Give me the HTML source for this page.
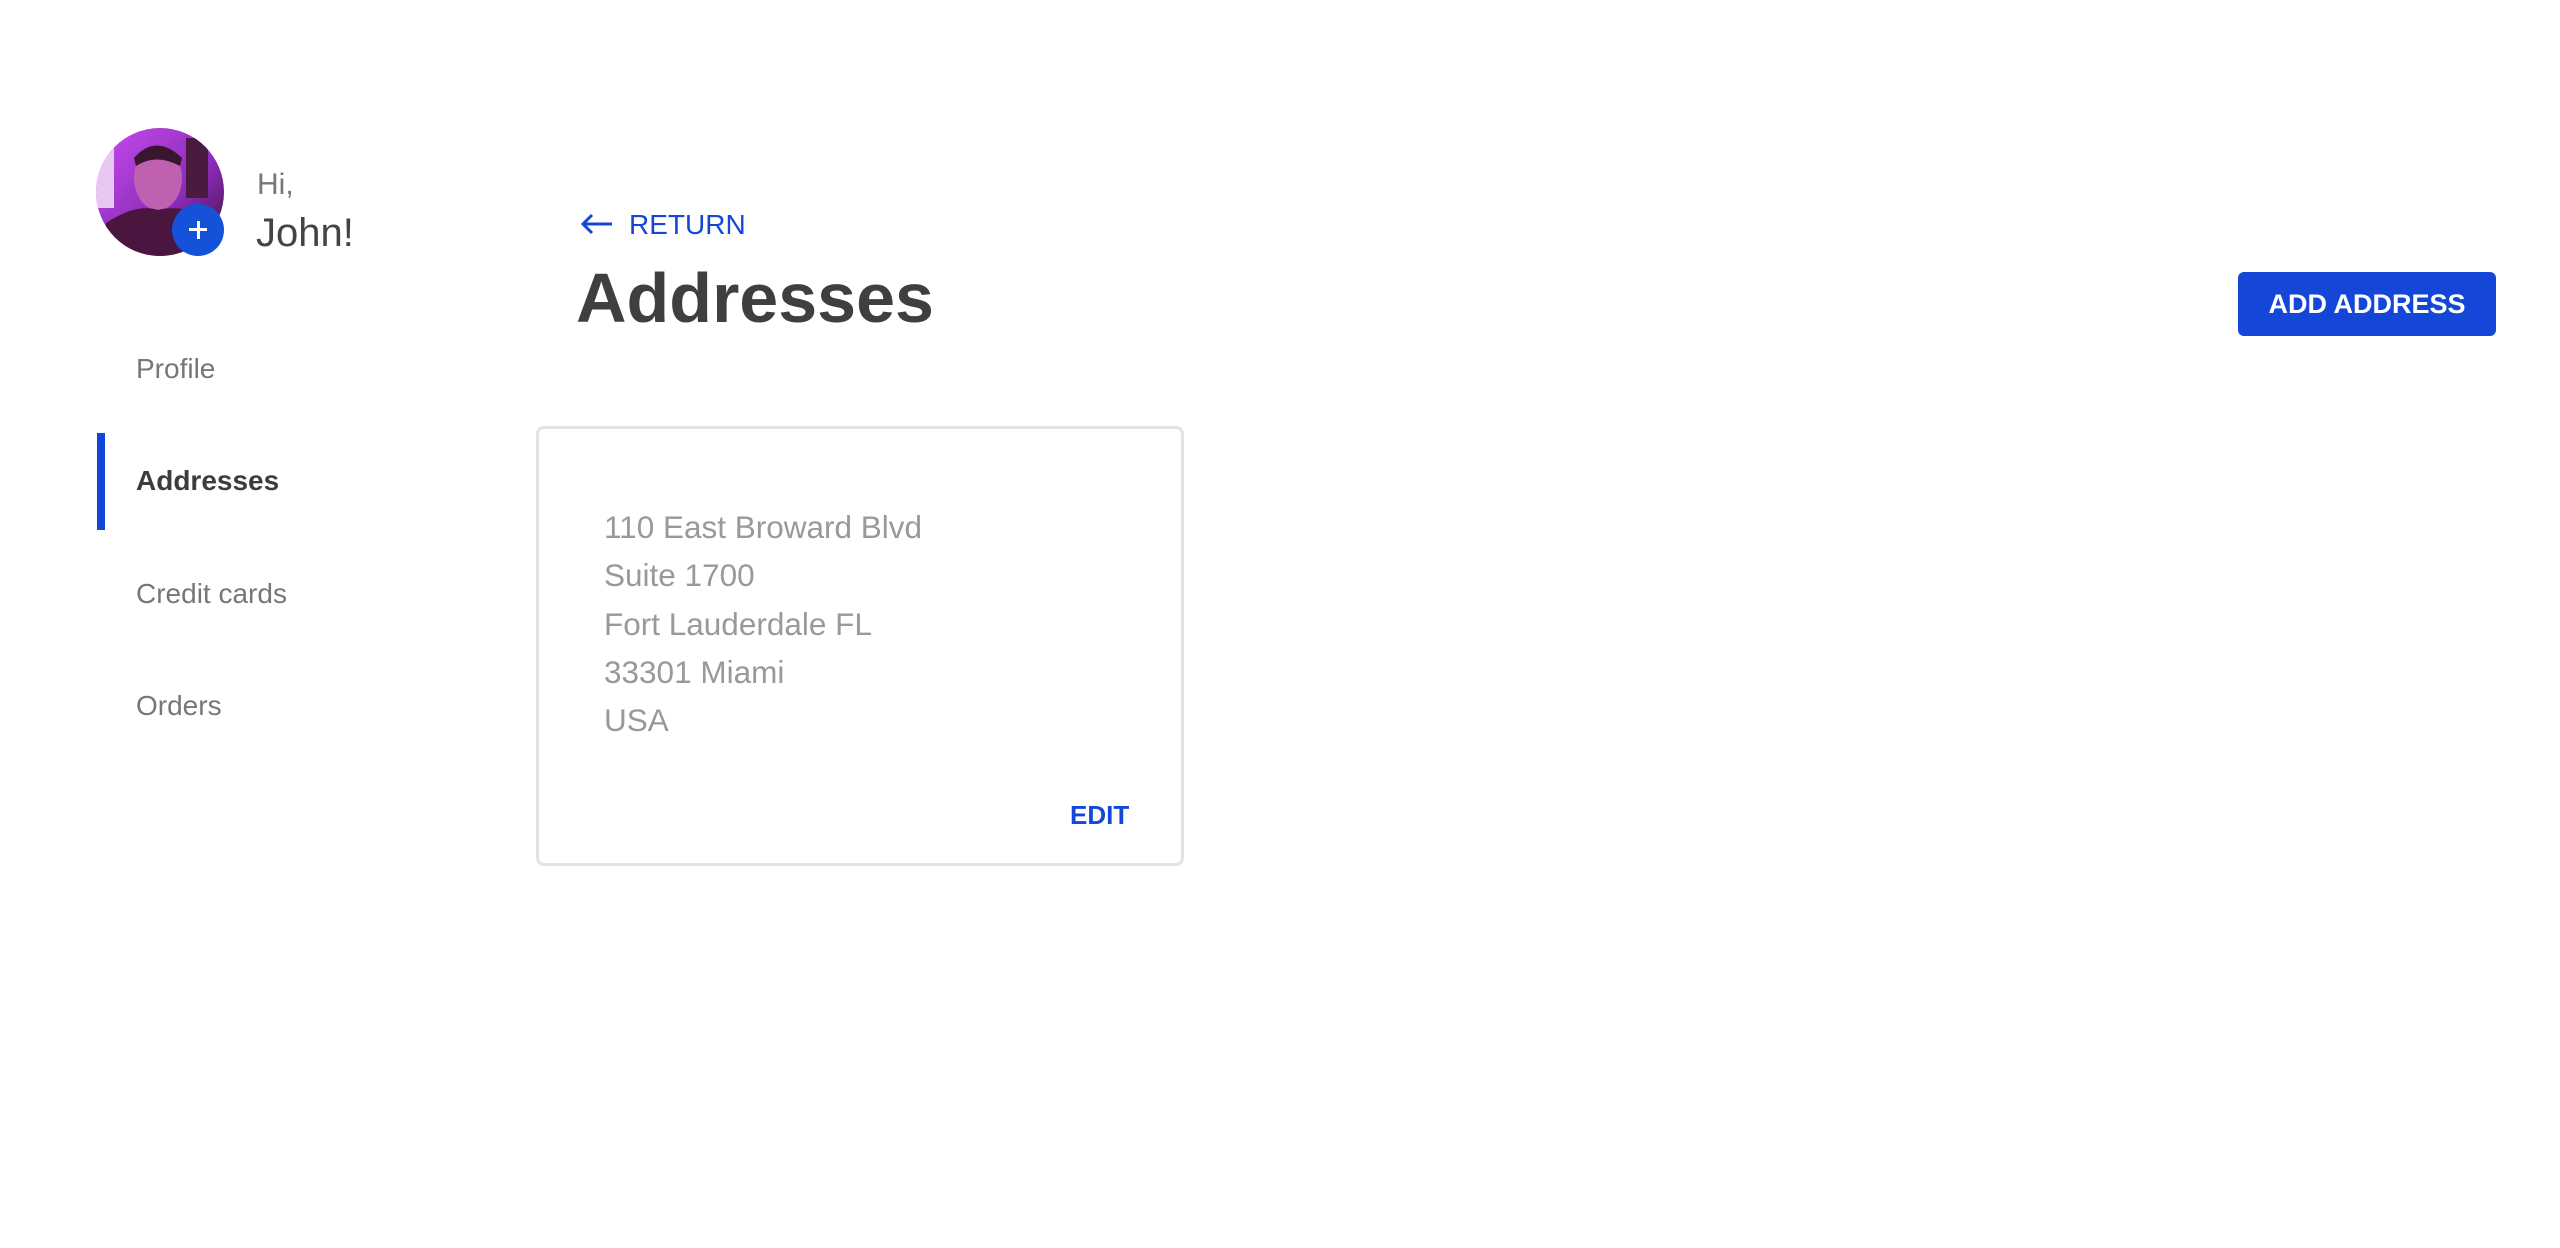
<!DOCTYPE html>
<html><head><meta charset="utf-8"><style>
*{margin:0;padding:0;box-sizing:border-box}
body{width:2560px;height:1248px;background:#fff;font-family:"Liberation Sans",sans-serif;position:relative;overflow:hidden}
.abs{position:absolute;white-space:nowrap}
.blue{color:#1447d8}
</style></head><body>
<svg class="abs" style="left:96px;top:128px" width="128" height="128" viewBox="0 0 128 128">
<defs><clipPath id="c"><circle cx="64" cy="64" r="64"/></clipPath>
<linearGradient id="g" x1="0" y1="0" x2="1" y2="1"><stop offset="0" stop-color="#c84df0"/><stop offset="0.6" stop-color="#8a2bb8"/><stop offset="1" stop-color="#3a1030"/></linearGradient></defs>
<g clip-path="url(#c)">
<rect width="128" height="128" fill="url(#g)"/>
<rect x="0" y="20" width="18" height="60" fill="#e8c8f0"/>
<rect x="90" y="10" width="22" height="60" fill="#4a1a40"/>
<ellipse cx="62" cy="50" rx="24" ry="32" fill="#c060b0"/>
<path d="M38 30 Q60 5 86 30 L84 38 Q60 25 40 38Z" fill="#3a1530"/>
<path d="M0 128 L10 95 Q40 75 62 82 Q90 75 120 95 L128 128Z" fill="#4a1640"/>
</g></svg>
<div class="abs" style="left:172px;top:204px;width:52px;height:52px;border-radius:50%;background:#1452da;"></div>
<div class="abs" style="left:189px;top:228px;width:18px;height:3px;background:#fff"></div>
<div class="abs" style="left:196.5px;top:221px;width:3px;height:18px;background:#fff"></div>
<div class="abs" style="left:257px;top:168px;font-size:30px;color:#777;font-weight:300">Hi,</div>
<div class="abs" style="left:256px;top:211px;font-size:40px;color:#444;font-weight:300">John!</div>

<div class="abs" style="left:136px;top:353px;font-size:28px;color:#777">Profile</div>
<div class="abs" style="left:97px;top:433px;width:8px;height:97px;background:#1447d8"></div>
<div class="abs" style="left:136px;top:465px;font-size:28px;color:#3c3c3c;font-weight:bold">Addresses</div>
<div class="abs" style="left:136px;top:578px;font-size:28px;color:#777">Credit cards</div>
<div class="abs" style="left:136px;top:690px;font-size:28px;color:#777">Orders</div>

<svg class="abs" style="left:580px;top:212px" width="34" height="24" viewBox="0 0 34 24"><path d="M32 12H3M12 3L3 12L12 21" stroke="#1447d8" stroke-width="3" fill="none"/></svg>
<div class="abs blue" style="left:629px;top:209px;font-size:28px">RETURN</div>
<div class="abs" style="left:576px;top:258px;font-size:70px;font-weight:bold;color:#3f3f3f">Addresses</div>

<div class="abs" style="left:2238px;top:272px;width:258px;height:64px;background:#1447d8;border-radius:6px;color:#fff;font-size:27px;font-weight:bold;text-align:center;line-height:64px">ADD ADDRESS</div>

<div class="abs" style="left:536px;top:426px;width:648px;height:440px;border:3px solid #e3e3e3;border-radius:8px"></div>
<div class="abs" style="left:604px;top:503px;font-size:31.5px;color:#999;line-height:48.3px">110 East Broward Blvd<br>Suite 1700<br>Fort Lauderdale FL<br>33301 Miami<br>USA</div>
<div class="abs blue" style="left:1070px;top:800px;font-size:26px;font-weight:bold">EDIT</div>
</body></html>
